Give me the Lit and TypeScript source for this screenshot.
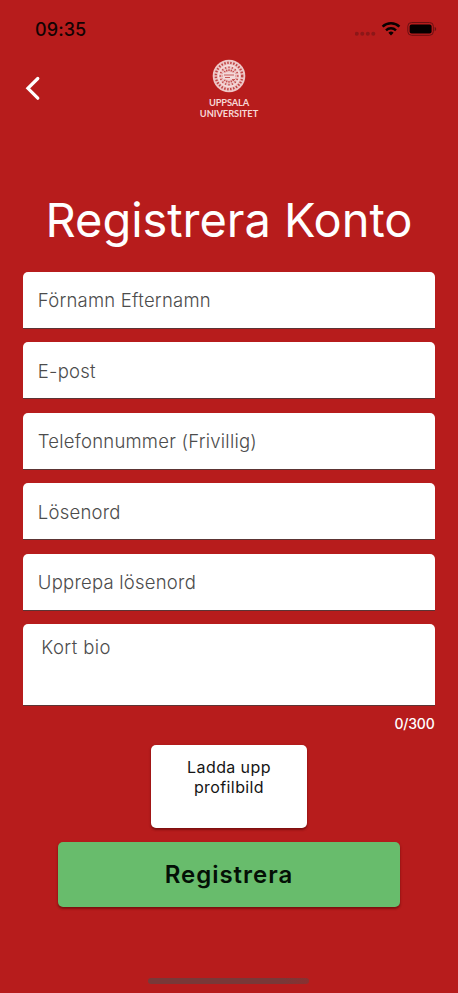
import { LitElement, html, css, svg } from "lit";
import { customElement, state } from "lit/decorators.js";

@customElement("uu-logo")
class UuLogo extends LitElement {
  static styles = css`
    :host { display: flex; flex-direction: column; align-items: center; width: 64px; height: 63px; }
    svg { display: block; margin: 1px 1px 0 0; }
    span {
      font-family: Lato, "Open Sans", sans-serif; font-weight: 700; font-size: 9.3px; line-height: 11px;
      color: #f6d6d6; white-space: nowrap;
    }
    .top { margin-top: 3.5px; letter-spacing: -0.15px; }
    .bottom { letter-spacing: -0.05px; }
  `;
  render() {
    const rays = Array.from({ length: 16 }, (_, i) => {
      const a = (i * Math.PI) / 8;
      const c = Math.cos(a), s = Math.sin(a);
      return svg`<line x1=${17 + c * 5} y1=${17 + s * 5} x2=${17 + c * 10} y2=${17 + s * 10}/>`;
    });
    return html`
      <svg width="34" height="34" viewBox="0 0 34 34">
        <circle cx="17" cy="17" r="16.3" fill="#eec6c6"/>
        <circle cx="17" cy="17" r="13.2" fill="none" stroke="#c04444" stroke-width="2.4" stroke-dasharray="1.5 1.5"/>
        <circle cx="17" cy="17" r="10.6" fill="none" stroke="#f8e2e2"/>
        <g stroke="#c34a4a" stroke-width="1.3" stroke-dasharray="1.8 1">${rays}</g>
        <rect x="10.5" y="13.5" width="13" height="7" rx="2" fill="#f3d9d9"/>
        <path d="M12 16h10M13 18.5h5M20 20.5h3" stroke="#c34a4a" stroke-width=".9"/>
      </svg>
      <span class="top">UPPSALA</span>
      <span class="bottom">UNIVERSITET</span>`;
  }
}

@customElement("status-bar")
class StatusBar extends LitElement {
  static styles = css`
    :host { display: flex; justify-content: space-between; height: 58px; box-sizing: border-box; padding: 18px 21px 0 35px; }
    .time { font-size: 18px; line-height: 23px; font-weight: 500; color: #120303; letter-spacing: 0.1px; }
    svg { display: block; }
  `;
  render() {
    return html`
      <span class="time">09:35</span>
      <svg width="82" height="24" viewBox="355 18 82 24">
        <g fill="#8c1718">
          <circle cx="356.8" cy="33.8" r="2"/><circle cx="362.3" cy="33.8" r="2"/>
          <circle cx="367.8" cy="33.8" r="2"/><circle cx="373.3" cy="33.8" r="2"/>
        </g>
        <g fill="none" stroke="#090101" stroke-width="2.5">
          <path d="M382.6 26.7a12.2 12.2 0 0 1 16.8 0"/>
          <path d="M386 30.3a7.3 7.3 0 0 1 10 0"/>
        </g>
        <path d="M388.4 32.7a3.8 3.8 0 0 1 5.2 0L391 35.5z" fill="#090101"/>
        <rect x="407.8" y="22.5" width="25.6" height="12.8" rx="3.8" fill="none" stroke="#6b1011"/>
        <rect x="409.6" y="24.4" width="22" height="9" rx="2" fill="#050000"/>
        <path d="M434.7 27v4.2c.9-.3 1.5-1.1 1.5-2.1s-.6-1.8-1.5-2.1z" fill="#6b1011"/>
      </svg>`;
  }
}

@customElement("app-root")
class AppRoot extends LitElement {
  static styles = css`
    :host {
      display: flex; flex-direction: column; position: relative; box-sizing: border-box;
      width: 458px; height: 993px; overflow: hidden; background: #b71c1c;
      font-family: Inter, Roboto, sans-serif;
    }
    .header { display: grid; grid-template-columns: 1fr 64px 1fr; height: 60px; padding: 0 23px; }
    .back { border: 0; background: none; padding: 17px 0 0 2px; justify-self: start; align-self: start; }
    .back svg { display: block; }
    .logo { grid-column: 2; }
    h1 {
      margin: 73px 0 0; height: 60px; font-size: 47px; line-height: 58px; font-weight: 400;
      color: #fff; text-align: center; letter-spacing: -0.06px; white-space: nowrap;
    }
    .form { display: flex; flex-direction: column; gap: 13.6px; padding: 0 23.3px; margin-top: 20.5px; }
    .field {
      height: 57px; box-sizing: border-box; padding: 1px 14.5px 0; display: flex; align-items: center;
      background: #fff; border-bottom: 1px solid #5c3434; border-radius: 5px 5px 0 0;
      color: #4c4c4c; font-size: 18.5px; font-weight: 320; letter-spacing: 0.23px; white-space: nowrap;
    }
    .bio { height: 82px; align-items: flex-start; padding: 12px 18px; line-height: 23px; letter-spacing: 0.4px; }
    .counter {
      margin: 8.5px 23.5px 0; text-align: right; color: #fff; font-size: 14px; font-weight: 500; line-height: 18px; letter-spacing: -0.2px;
    }
    .upload, .submit {
      border: 0; align-self: center; border-radius: 5px; font-family: inherit; box-sizing: border-box;
      box-shadow: 0 2px 2px rgba(60, 0, 0, 0.35), 0 1px 3px rgba(60, 0, 0, 0.25);
    }
    .upload {
      width: 155.5px; height: 83px; margin-top: 12.5px; padding: 12px 20px 0; background: #fff; color: #151515;
      font-size: 16px; line-height: 20px; letter-spacing: 0.4px; display: flex; justify-content: center;
    }
    .submit {
      width: 341.5px; height: 65.5px; margin-top: 13.5px; padding: 0; background: #68bc6c; color: #041006;
      font-size: 24px; font-weight: 600; letter-spacing: 0.98px;
    }
    .home { width: 161px; height: 5.5px; border-radius: 3px; background: linear-gradient(90deg, #793838 84%, #8a3030); margin: auto 0 9.5px 147.5px; }
  `;

  @state() private fields = ["Förnamn Efternamn", "E-post", "Telefonnummer (Frivillig)", "Lösenord", "Upprepa lösenord"];

  render() {
    return html`
      <status-bar></status-bar>
      <div class="header">
        <button class="back" aria-label="Tillbaka">
          <svg width="16" height="26" viewBox="0 0 16 26"><path d="M12.8 3.5L2.9 13.3l9.9 9.9" fill="none" stroke="#fff" stroke-width="3.2" stroke-linecap="round"/></svg>
        </button>
        <uu-logo class="logo"></uu-logo>
      </div>
      <h1>Registrera Konto</h1>
      <div class="form">
        ${this.fields.map((f) => html`<div class="field">${f}</div>`)}
        <div class="field bio">Kort bio</div>
      </div>
      <div class="counter">0/300</div>
      <button class="upload"><span>Ladda upp<br>profilbild</span></button>
      <button class="submit">Registrera</button>
      <div class="home"></div>
    `;
  }
}
